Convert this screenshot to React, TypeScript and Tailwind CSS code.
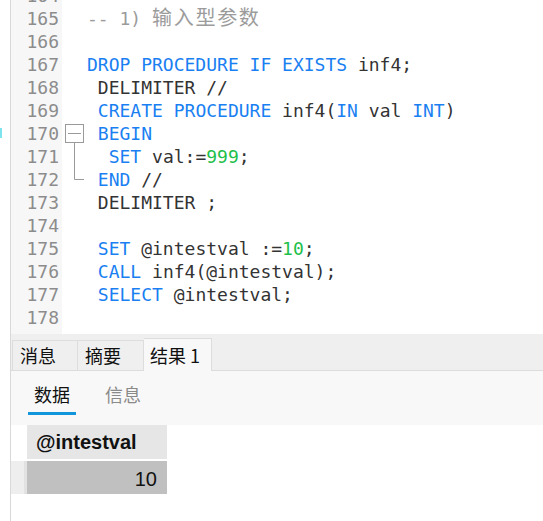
import React from "react";

type Tok = { t: string; c?: "kw" | "num" | "cm" | "cjk" };

const lines: { n: number; toks: Tok[]; fold?: "start" | "mid" | "end" }[] = [
  { n: 164, toks: [] },
  { n: 165, toks: [{ t: "-- 1) ", c: "cm" }, { t: "输入型参数", c: "cjk" }] },
  { n: 166, toks: [] },
  {
    n: 167,
    toks: [
      { t: "DROP PROCEDURE IF EXISTS", c: "kw" },
      { t: " inf4;" },
    ],
  },
  { n: 168, toks: [{ t: " DELIMITER //" }] },
  {
    n: 169,
    toks: [
      { t: " " },
      { t: "CREATE PROCEDURE", c: "kw" },
      { t: " inf4(" },
      { t: "IN", c: "kw" },
      { t: " val " },
      { t: "INT", c: "kw" },
      { t: ")" },
    ],
  },
  { n: 170, toks: [{ t: " " }, { t: "BEGIN", c: "kw" }], fold: "start" },
  {
    n: 171,
    toks: [{ t: "  " }, { t: "SET", c: "kw" }, { t: " val:=" }, { t: "999", c: "num" }, { t: ";" }],
    fold: "mid",
  },
  { n: 172, toks: [{ t: " " }, { t: "END", c: "kw" }, { t: " //" }], fold: "end" },
  { n: 173, toks: [{ t: " DELIMITER ;" }] },
  { n: 174, toks: [] },
  {
    n: 175,
    toks: [{ t: " " }, { t: "SET", c: "kw" }, { t: " @intestval :=" }, { t: "10", c: "num" }, { t: ";" }],
  },
  { n: 176, toks: [{ t: " " }, { t: "CALL", c: "kw" }, { t: " inf4(@intestval);" }] },
  { n: 177, toks: [{ t: " " }, { t: "SELECT", c: "kw" }, { t: " @intestval;" }] },
  { n: 178, toks: [] },
  { n: 179, toks: [] },
];

function Fold({ kind }: { kind?: "start" | "mid" | "end" }) {
  if (!kind) return null;
  return (
    <svg width="25" height="23" viewBox="0 0 25 23" className="block">
      {kind === "start" && (
        <g stroke="#9a9a9a" fill="none" strokeWidth="1">
          <rect x="3.5" y="2.5" width="18" height="18" fill="#fff" />
          <line x1="6" y1="11.5" x2="19" y2="11.5" />
          <line x1="12.5" y1="20.5" x2="12.5" y2="23" />
        </g>
      )}
      {kind === "mid" && <line x1="12.5" y1="0" x2="12.5" y2="23" stroke="#9a9a9a" />}
      {kind === "end" && (
        <path d="M12.5 0 V11.5 H22" stroke="#9a9a9a" fill="none" />
      )}
    </svg>
  );
}

const color = {
  kw: "text-[#1a7ff2]",
  num: "text-[#1dbf4a]",
  cm: "text-[#9b9b9b]",
  cjk: "text-[#9b9b9b] text-[20px] tracking-[1.7px]",
};

export default function App() {
  return (
    <div className="w-[543px] h-[521px] bg-white overflow-hidden relative">
      <div className="ml-[10px] h-full border-l border-[#d9d9d9] flex flex-col">
        {/* editor */}
        <div className="h-[334px] overflow-hidden relative">
          <div className="mt-[-16.5px]" style={{ fontFamily: "'DejaVu Sans Mono', 'Noto Sans CJK SC', monospace" }}>
            {lines.map((l) => (
              <div key={l.n} className="flex h-[23px] leading-[23px] text-[18px]">
                <div className="w-[51px] bg-[#f7f7f7] text-right pr-[3px] text-[#8c8c8c]">{l.n}</div>
                <div className="w-[25px]">
                  <Fold kind={l.fold} />
                </div>
                <div className="whitespace-pre text-[#333333]">
                  {l.toks.map((t, i) => (
                    <span key={i} className={t.c ? color[t.c] : ""}>
                      {t.t}
                    </span>
                  ))}
                </div>
              </div>
            ))}
          </div>
        </div>

        {/* result panel */}
        <div style={{ fontFamily: "'Noto Sans CJK SC', 'Liberation Sans', sans-serif" }}>
          <div className="h-[37px] bg-[#efefef] border-b border-[#dcdcdc] flex items-end pl-px">
            <div className="h-[30px] w-[66px] border border-b-0 border-[#dddddd] flex items-center px-[7px] text-[18px] text-[#111]">
              消息
            </div>
            <div className="h-[30px] w-[66px] border border-b-0 border-l-0 border-[#dddddd] flex items-center px-[7px] text-[18px] text-[#111]">
              摘要
            </div>
            <div className="h-[33px] w-[68px] bg-[#f8f8f8] border border-b-0 border-l-0 border-[#dddddd] mb-[-1px] flex items-center px-[6px] text-[18px] text-[#111] whitespace-nowrap">
              结果 1
            </div>
          </div>
          <div className="h-[54px] bg-[#f8f8f8] flex items-end pl-[17px] gap-[29px]">
            <div className="flex flex-col items-center">
              <span className="text-[18px] text-[#111] leading-[24px] px-[5px]">数据</span>
              <span className="mt-[6px] mb-[10px] h-[3px] w-[48px] bg-[#1296db]" />
            </div>
            <div className="flex flex-col items-center">
              <span className="text-[18px] text-[#8a8a8a] leading-[24px]">信息</span>
              <span className="mt-[6px] mb-[10px] h-[3px] w-[36px]" />
            </div>
          </div>
        </div>

        {/* grid */}
        <div style={{ fontFamily: "'Liberation Sans', 'Noto Sans', sans-serif" }}>
          <div className="flex">
            <div className="w-[16px]" />
            <div className="w-[140px] h-[34px] bg-[#e6e6e6] flex items-center pl-[9px] text-[20px] font-bold text-[#111]">
              @intestval
            </div>
          </div>
          <div className="flex mt-[2px]">
            <div className="w-[13px] h-[33px] bg-[#eeeeee]" />
            <div className="w-[3px] h-[33px] bg-[#e2e2e2]" />
            <div className="w-[140px] h-[33px] bg-[#c0c0c0] flex items-center justify-end pr-[10px] pt-[2px] text-[20px] text-[#111]">
              10
            </div>
          </div>
        </div>
      </div>
      <div className="absolute left-0 top-[128px] w-[2px] h-[10px] bg-[#7fe3ee]" />
    </div>
  );
}
